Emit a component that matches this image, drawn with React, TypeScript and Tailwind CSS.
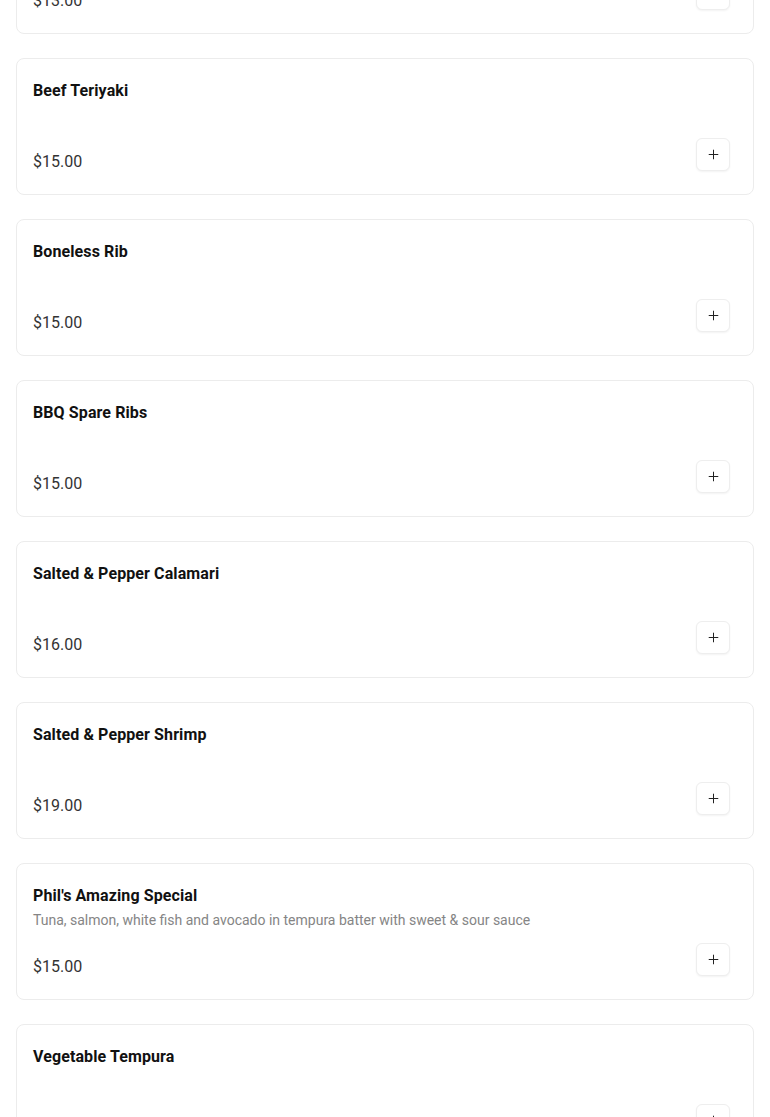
import React from 'react';
import { Plus } from 'lucide-react';

type Item = { name: string; price: string; description?: string };

const items: Item[] = [
  { name: 'Chicken Teriyaki', price: '$13.00' },
  { name: 'Beef Teriyaki', price: '$15.00' },
  { name: 'Boneless Rib', price: '$15.00' },
  { name: 'BBQ Spare Ribs', price: '$15.00' },
  { name: 'Salted & Pepper Calamari', price: '$16.00' },
  { name: 'Salted & Pepper Shrimp', price: '$19.00' },
  {
    name: "Phil's Amazing Special",
    price: '$15.00',
    description: 'Tuna, salmon, white fish and avocado in tempura batter with sweet & sour sauce',
  },
  { name: 'Vegetable Tempura', price: '$12.00' },
];

function MenuCard({ item }: { item: Item }) {
  return (
    <div className="flex h-[137px] flex-col rounded-lg border border-[#ececec] bg-white pb-5 pl-4 pr-[23px] pt-5">
      <h4 className="text-base leading-6 font-bold tracking-[0.1px] text-[#111]">{item.name}</h4>
      {item.description && (
        <p className="mt-[2px] text-sm leading-5 text-[#858585]">{item.description}</p>
      )}
      <div className="mt-auto flex items-end justify-between">
        <span className="text-base leading-6 text-[#333]">{item.price}</span>
        <button className="mb-[3px] flex h-[33px] w-[34px] items-center justify-center rounded-md border border-[#eeeeee] bg-white text-[#222] shadow-[0_1px_2px_rgba(0,0,0,0.05)]">
          <Plus size={15} strokeWidth={1.6} />
        </button>
      </div>
    </div>
  );
}

export default function App() {
  return (
    <div className="min-h-screen overflow-hidden bg-white font-['Roboto',sans-serif]">
      <div className="-mt-[103px] flex flex-col gap-6 px-4 pb-6">
        {items.map((item) => (
          <MenuCard key={item.name} item={item} />
        ))}
      </div>
    </div>
  );
}
